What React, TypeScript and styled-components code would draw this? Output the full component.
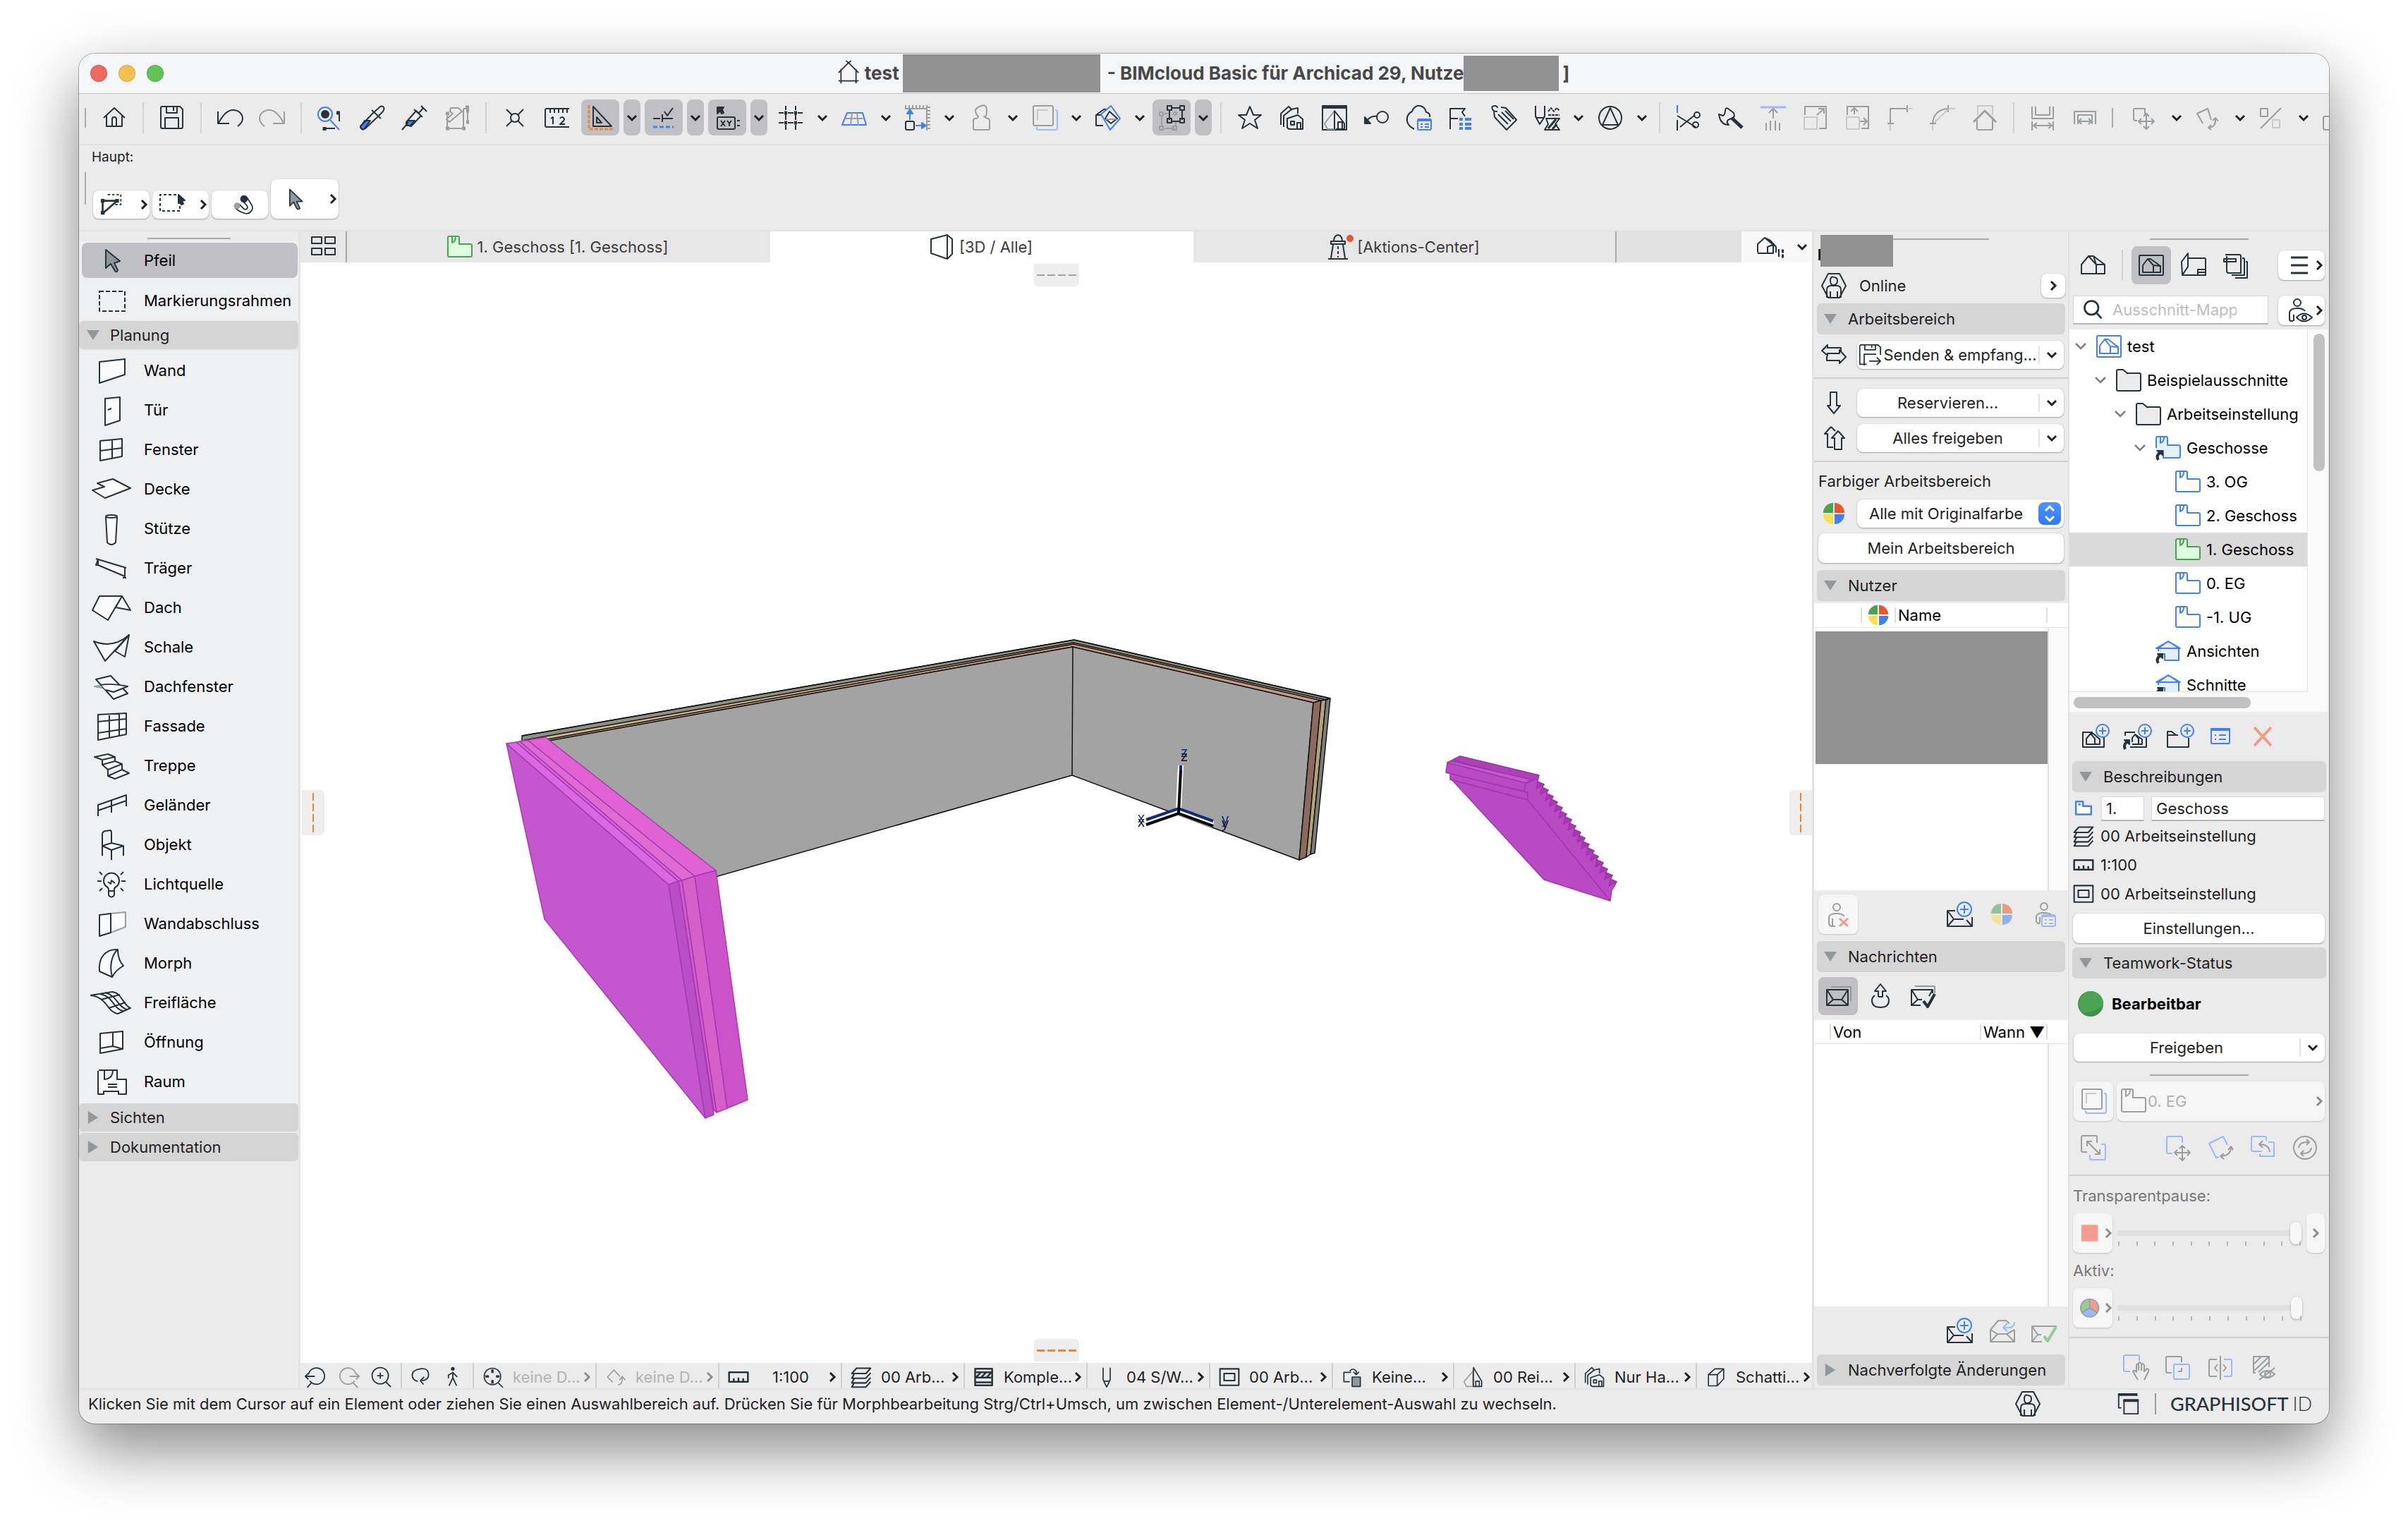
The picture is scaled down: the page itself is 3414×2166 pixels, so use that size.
import React from "react";
import styled, { createGlobalStyle, css } from "styled-components";

const INK = "#26333b";
const BLUE = "#417ff9";
const PALE = "#9cb8f6";
const GREY = "#9a9ea1";
const LIGHT = "#c6c8ca";
const GREEN = "#46a350";
const ORANGE = "#f0862d";

const Global = createGlobalStyle`
  *, *::before, *::after { box-sizing: border-box; }
  body { margin: 0; background: #fff; }
  button, input, select { font: inherit; color: inherit; margin: 0; padding: 0; border: 0; background: none; }
  ul { list-style: none; margin: 0; padding: 0; }
`;

/* ---------- icons ---------- */

const icons: Record<string, React.ReactNode> = {
  home: <path d="M3 18 18 4 33 18M7 15V30H29V15M15 30V20Q15 17 18 17T21 20V30" />,
  save: <path d="M2 4Q2 2 4 2H29L33 6V31Q33 33 31 33H4Q2 33 2 31ZM10 2V11H25V2M20 3V8M8 33V18H27V33" />,
  undo: <path d="M1 9V26H17M2 25C8 14 14 7 22 7C31 7 36 13 36 19C36 24 33 27 29 30" />,
  redo: <path stroke={GREY} d="M35 9V26H19M34 25C28 14 22 7 14 7C5 7 0 13 0 19C0 24 3 27 7 30" />,
  findSelect: (
    <>
      <circle cx="11" cy="13" r="10" stroke={BLUE} />
      <circle cx="11" cy="13" r="5" fill={INK} />
      <path stroke={BLUE} d="M18 21 31 35" />
      <path d="M29 11H31V23M10 33H25" />
      <path strokeWidth="5" d="M27 11h5M10 31v5" />
    </>
  ),
  eyedropper: (
    <>
      <path fill={BLUE} d="M7 22H15L7 33Q4 36 2 33T3 28Z" />
      <path d="M26 5Q30 0 33 2T33 9L25 17 8 33Q4 36 2 33T3 28L19 11ZM17 7 30 19" />
    </>
  ),
  syringe: (
    <>
      <path fill={BLUE} d="M9 22H18L12 29H6Z" />
      <path d="M0 35 6 28 6 24 20 8 27 15 13 30 6 28M24 11 30 4M27 1 35 9M17 6 29 17" />
    </>
  ),
  transfer: (
    <g stroke={GREY}>
      <path d="M9 4H20L25 9 7 24 3 20 12 12 8 9ZM4 15V33H27V5M27 5H33V24" />
      <path strokeWidth="5" d="M2 12h5M30 3h5M2 33h5M25 33h5M31 24h4M31 8h4" />
    </g>
  ),
  cross: <><circle cx="18" cy="18" r="6" /><path d="M6 6 14 14M30 6 22 14M6 30 14 22M30 30 22 22" /></>,
  ruler12: (
    <>
      <path d="M35 5H3Q1 5 1 7V29Q1 31 3 31H35M8 5V11M14 5V11M20 5V11M26 5V11M32 5V11" />
      <path d="M9 19 12 17V27M22 19Q23 17 25 17T28 20Q28 22 22 27H29" />
    </>
  ),
  triangle: (
    <>
      <path d="M8 2V30H34ZM13 17V25H20Z" />
      <path stroke={ORANGE} strokeWidth="3" strokeDasharray="5 2" d="M2 0V34H36" />
    </>
  ),
  guide: (
    <>
      <path d="M3 19H13M17 19H31M16 13V24M19 9 23 15 31 4" />
      <path stroke={BLUE} strokeWidth="3" strokeDasharray="6 3" d="M3 31H32" />
    </>
  ),
  xy: (
    <>
      <path fill={INK} d="M4 3H13L11 6 13 11 10 12 8 8 4 12Z" />
      <rect x="4" y="17" width="25" height="17" rx="2" />
      <path d="M9 22 15 30M15 22 9 30M18 22 21 26 24 22M21 26V30M32 22h4M32 29h4" />
    </>
  ),
  grid: (
    <>
      <path d="M11 1V7M11 13V21M11 28V35M25 1V7M25 13V21M25 28V35M1 11H8M14 11H22M28 11H35M1 25H8M14 25H22M28 25H35" />
      <path strokeWidth="5" d="M9 11h4M23 11h4M9 25h4M23 25h4" />
    </>
  ),
  perspective: <g stroke={BLUE}><path d="M8 11H30L35 28H1Z" /><path stroke={GREY} d="M5 19H32M15 11 13 28M22 11 24 28" /></g>,
  dimension: (
    <>
      <path stroke={GREY} strokeWidth="4" strokeDasharray="2 3" d="M0 2H35M34 2V36" />
      <path stroke={GREY} d="M0 5H31V36" />
      <rect x="1" y="23" width="12" height="12" rx="2" />
      <path stroke={BLUE} d="M7 21V9M15 29H25" />
      <path stroke={BLUE} fill={BLUE} d="M7 6 11 12H3ZM30 29 24 25V33Z" />
    </>
  ),
  stamp: <path stroke={GREY} d="M14 16Q10 12 10 8T18 1T26 8T22 16Q25 19 28 19Q30 20 30 22V33Q30 35 28 35H9Q7 35 7 33V22Q7 20 9 19Q14 19 14 16Z" />,
  trace: (
    <>
      <path stroke={PALE} d="M7 31V33Q7 35 9 35H34Q36 35 36 33V9Q36 7 34 7H33" />
      <rect x="2" y="1" width="28" height="28" rx="2" stroke={GREY} />
      <path stroke={LIGHT} d="M8 21V7H22" />
    </>
  ),
  cutPlane: (
    <>
      <path d="M11 29H1V14L12 6H17M1 14H8" />
      <path stroke={BLUE} d="M22 1 35 19 21 35 8 13Z" />
      <path d="M20 9 31 19 22 26 14 19Z" />
      <path stroke={GREY} d="M15 20H30" />
    </>
  ),
  groupSel: (
    <>
      <g stroke={GREY}><path d="M4 14V31M8 33H22M24 31V24M8 12H12" /><rect x="1" y="10" width="5" height="5" /><rect x="1" y="30" width="5" height="5" /><rect x="20" y="30" width="5" height="5" /><circle cx="23" cy="12" r="2" /></g>
      <path d="M15 6V21M18 4H30M33 6V21M18 23H30" />
      <rect x="12" y="1" width="6" height="6" /><rect x="30" y="1" width="6" height="6" /><rect x="12" y="19" width="6" height="6" /><rect x="30" y="19" width="6" height="6" />
    </>
  ),
  star: <path d="M18 2 23 14H34L25 21 29 33 18 26 7 33 11 21 2 14H13Z" />,
  houses: <path d="M2 28V12L13 2 18 7M6 31V15L17 6 26 4V12M11 33V19L26 14 33 20V34H15Q11 34 11 30M16 23h5v5h-5zM25 34V25h5V34" />,
  pictureHouse: (
    <>
      <rect x="1" y="1" width="34" height="34" />
      <path strokeWidth="4" d="M1 3H35" />
      <path stroke={GREY} d="M4 26 18 8V34H8Z" />
      <path d="M18 8 32 26V34H20M18 8V34M23 34V24H29V34" />
    </>
  ),
  link: <><circle cx="26" cy="17" r="8" /><path d="M18 16C10 15 6 18 3 24" /><path fill={INK} d="M1 17V26H9Z" /></>,
  cloudDoc: (
    <>
      <path d="M11 34C3 30 0 24 1 18C2 12 6 10 8 9C10 3 15 0 19 1C25 2 27 6 28 10C32 11 34 13 33 17" />
      <rect x="16" y="20" width="19" height="15" rx="2" stroke={BLUE} /><path stroke={BLUE} strokeWidth="4" d="M16 21H35" /><path stroke={BLUE} d="M20 27h3M26 27h6M20 31h3M26 31h6" />
    </>
  ),
  flagList: <><path d="M2 34V5H23L19 10 23 16M2 19H13" /><g stroke={BLUE} strokeWidth="4"><path d="M15 20h5M23 20h9M15 27h5M23 27h9M15 33h5M23 33h9" /></g></>,
  tag: <path d="M9 9C2 10 -2 1 5 1Q9 1 9 4M14 3 21 4 36 21 22 35 5 17 4 9M10 13 24 27M15 10 28 23M20 8 32 20" />,
  penHatch: (
    <>
      <path d="M2 1V15Q2 18 5 18H12Q15 18 15 15V1M3 18 8 27 14 18" />
      <path d="M20 9 24 4 28 9 32 4 36 8M20 14H36" strokeDasharray="4 1" />
      <path d="M17 19H36L30 27 36 35H15L20 27Z" /><path strokeWidth="3" d="M20 33 31 20M26 34 32 27" />
    </>
  ),
  circleTri: <><ellipse cx="18" cy="18" rx="16" ry="16" /><path d="M18 4 29 28H7Z" /></>,
  split: <><path stroke={BLUE} d="M2 0V11" /><path d="M2 21V36M2 15 28 31M6 31 27 14" /><circle cx="30" cy="14" r="4" /><circle cx="28" cy="28" r="4" /></>,
  hammer: <><path d="M10 7Q11 3 14 5L22 11Q24 16 21 18L14 21Q11 24 15 28Q3 28 1 13L7 15Q10 13 10 7" /><path strokeWidth="5" d="M19 18 34 32" /></>,
  elevate: <g stroke={GREY}><path stroke={PALE} strokeWidth="3" d="M0 3H36" /><path d="M18 19V5M12 11 18 5 24 11M8 36V25M14 36V22M21 36V22M27 36V25" /></g>,
  resize: <g stroke={GREY}><path d="M3 14V2H33V33H23" /><path d="M20 14 29 6M22 5H30V12" /><path stroke={LIGHT} d="M2 17H20V34H2Z" /></g>,
  stretch: <g stroke={GREY}><path d="M3 14V2H33V33H23M13 13V5M8 9 13 4 18 9M21 23H30M26 18 31 23 26 28" /><path stroke={LIGHT} d="M2 17H20V34H2Z" /></g>,
  corner: <g stroke={GREY}><path d="M4 26V5H28M28 0V10M0 26H9" /><path stroke={LIGHT} d="M28 5H36M4 27V36" /></g>,
  fillet: <g stroke={GREY}><path d="M4 26C5 14 12 6 26 5M26 0V10M0 26H9" /><path stroke={LIGHT} d="M26 5H36M4 27V36M6 25 26 6" /></g>,
  roofTrim: <g stroke={GREY}><path stroke={LIGHT} d="M8 14V1H29V14" /><path d="M7 21V33Q7 35 9 35H27Q29 35 29 33V21" /><path strokeWidth="3" d="M2 24 18 8 34 24" /></g>,
  gapDim: <g stroke={GREY}><path d="M3 2V19H33V2M8 2V14H28V2M3 23V36M33 23V36M5 29H31M10 25 5 29 10 33M26 25 31 29 26 33" /></g>,
  frameDim: <g stroke={GREY}><path d="M3 27V9H33V27M8 27V14H28V27M9 23H27M13 19 9 23 13 27M23 19 27 23 23 27" /></g>,
  moveEdit: <g stroke={GREY}><path d="M7 22H5Q2 22 2 19V7Q2 5 4 5H18V13" /><path d="M20 13V34M10 23H30M16 16 20 12 24 16M16 30 20 34 24 30M13 19 9 23 13 27M27 19 31 23 27 27" /></g>,
  rotateEdit: <g stroke={GREY}><path d="M10 26 2 12 17 5 22 21" /><path d="M28 20C28 28 26 31 18 32M24 22 28 18 32 23M22 28 18 32 22 35" /></g>,
  percent: <g stroke={GREY}><path d="M31 4 2 33M2 5H12V16H2Z" /><path stroke={LIGHT} d="M19 21H29V32H19Z" /></g>,
  edgePair: <path stroke={GREY} d="M11 17V9Q11 7 13 7H20M5 16H18V35H5Q2 35 2 32V18Q2 16 5 16" />,
  floor: <path d="M1 3Q1 1 3 1H15Q17 1 17 3V13H33Q35 13 35 15V31Q35 33 33 33H3Q1 33 1 31ZM7 2V11Q13 9 13 2" />,
  box3d: <path d="M3 7 26 1V35L3 27ZM26 1 33 7V28L26 35" />,
  lighthouse: (
    <>
      <path d="M10 10Q10 2 16 1Q22 2 22 10M6 10H26V14H6ZM9 15 6 34M23 15 26 34M2 35H30M16 17v4M16 24v4M16 31v2" />
      <circle cx="33" cy="6" r="5" fill="#ea5430" stroke="none" />
    </>
  ),
  tiles: <path d="M1 4h14v9H1zM20 4h14v9H20zM1 20h14v9H1zM20 20h14v9H20z" />,
  houseList: <><path d="M2 26V14L12 5 24 15V27H2M16 27V18L26 14M12 5 20 9 28 18V26" /><path d="M32 21V32" /><path strokeWidth="5" d="M36 24h3M36 31h3" /></>,
  markClip: <><path strokeDasharray="4 3" d="M12 2H33V18H20" /><path strokeWidth="3" d="M3 12H27M4 12V31M27 12 4 32" /><path strokeWidth="6" d="M1 12h6M24 12h6M1 31h6" /></>,
  markRect: <><path strokeDasharray="4 3" d="M24 4H1V27H29V16" /><path fill={INK} d="M27 4 36 12H32L34 17 31 18 29 14 27 16Z" /></>,
  magnet: (
    <>
      <path d="M6 24C2 20 8 14 12 18L18 24C22 28 26 24 24 20L17 12C14 6 20 2 24 7L31 18C36 26 28 34 20 32C14 30 9 28 6 24Z" />
      <circle cx="19" cy="9" r="5" fill={INK} /><circle cx="8" cy="20" r="5" fill={GREY} stroke="none" />
    </>
  ),
  arrow: <path fill="#92979b" d="M10 3V29L16 23 21 33Q23 36 26 33L21 22H30Z" />,
  user: <path d="M10 1H26L35 18 26 35H10L1 18ZM18 6Q23 6 23 11T18 17T13 11T18 6M8 35V24Q8 18 14 18H22Q28 18 28 24V35M13 35V26M23 35V26" />,
  exchange: <path d="M7 7 1 12 9 19V15M1 12 9 4V8H28V14M13 16H9V16H26V11L35 21 26 30V26H8V20" />,
  saveSend: <path d="M35 18V6L31 2H4Q2 2 2 4V33H13M10 2V10H27V2M21 3V7M28 17H9V35M17 28H35M29 22 35 28 29 34" />,
  down: <path d="M13 3H22V22H27L18 33 9 22H13Z" />,
  up2: <path d="M14 2 5 12H9V31H17M14 2 20 8M24 8 33 18H29V34H19V18H15Z" />,
  wheel: (
    <g stroke="none">
      <path fill={GREEN} d="M17 3V17H3A14 14 0 0 1 17 3Z" /><path fill="#ea5430" d="M19 3V17H33A14 14 0 0 0 19 3Z" />
      <path fill="#f8e050" d="M17 33V19H3A14 14 0 0 0 17 33Z" /><path fill={BLUE} d="M19 33V19H33A14 14 0 0 1 19 33Z" />
    </g>
  ),
  userX: <><g stroke={GREY}><circle cx="16" cy="8" r="5" /><path d="M14 35H10Q5 35 5 30V22Q6 17 16 17Q24 17 27 21M10 34V24" /></g><path stroke="#f09a88" strokeWidth="3" d="M20 24 32 35M32 24 20 35" /></>,
  mailPlus: <><path d="M12 13H1V35H36V22M1 13 10 25H24M1 35 10 25M36 35 28 26" /><circle cx="25" cy="11" r="10" fill="#ebebeb" stroke={BLUE} /><path stroke={BLUE} d="M25 5V17M19 11H31" /></>,
  userDoc: <><g stroke={GREY}><circle cx="18" cy="7" r="5" /><path d="M12 31Q6 31 7 26V21Q8 16 18 16Q27 16 29 20M12 31V22" /></g><rect x="15" y="19" width="19" height="16" rx="2" stroke={PALE} fill="#ebebeb" /><path stroke={PALE} d="M15 21H34M19 26h3M25 26h6M19 31h3M25 31h6" /></>,
  mails: <><path stroke="#96979d" d="M8 5H36V25" /><path d="M2 9H32V31H2ZM2 9 11 23H23L32 9M2 31 11 23M32 31 23 23" /></>,
  outbox: <path d="M15 19V11H10L18 1 26 11H21V19H15M10 17Q6 20 6 24Q6 34 18 34T30 24Q30 20 26 17" />,
  mailCheck: <><path stroke="#96979d" d="M7 4H35V14" /><path d="M15 31H2V9H32V14M2 9 11 23H17M2 31 11 23M32 9 27 18" /><path strokeWidth="4" d="M19 25 25 33 35 15" /></>,
  mailReply: <g stroke={GREY}><path d="M2 17V34H36V17M2 17 13 4H24L29 8M2 17 12 23H25L36 17M2 34 12 23M36 34 25 23" /><path stroke={PALE} d="M36 6Q36 16 21 14M26 8 20 14 26 19" /></g>,
  mailDone: <g stroke={GREY}><path d="M15 34H1V12H36M1 12 9 24H14M1 34 9 24" /><path stroke="#98ca9b" strokeWidth="4" d="M18 26 23 33 35 13" /></g>,
  house: <path d="M1 30V17L11 5 22 17V30ZM11 5H18L34 17V30H22M22 17H34M18 5 22 17" />,
  houseFrame: <><rect x="1" y="4" width="34" height="28" rx="1" /><path d="M6 28V18L13 9 21 18V28ZM13 9H17L31 19V28H21M21 18 30 19" /></>,
  layout: <path d="M10 8H34Q35 8 35 10V32H2L1 13 10 1V20L2 32M24 32V24H35M24 28H35" />,
  pages: <path d="M3 3H23Q25 3 25 5V29H8Q5 29 5 26V5M1 9H18V13H1ZM27 8H29Q30 8 30 10V32H12M32 13H34V36H17" />,
  menu: <path strokeWidth="3" d="M6 7H30M6 18H30M6 29H30" />,
  userEye: <><circle cx="15" cy="7" r="5" /><path d="M9 33H6Q4 33 4 30V21Q5 15 15 15Q23 15 26 19M10 33V24" /><path d="M14 28Q24 17 36 28Q24 39 14 28Z" /><circle cx="25" cy="28" r="3" /></>,
  search: <><circle cx="16" cy="15" r="11" strokeWidth="3" /><path strokeWidth="3" d="M24 23 32 32" /></>,
  projectBlue: <g stroke={BLUE} fill="#fff"><rect x="1" y="3" width="34" height="30" rx="1" /><path d="M5 28V17L12 8 20 18V28ZM12 8H17L31 19V28H20M20 18 30 19" /></g>,
  folder: <><rect x="1" y="8" width="34" height="25" rx="2" fill="#ebebeb" /><path fill="#ebebeb" d="M1 9V5Q1 3 3 3H10L17 9" /></>,
  floorBlue: <g stroke={BLUE}><path fill="#fff" d="M1 5Q1 3 3 3H15Q17 3 17 5V14H33Q35 14 35 16V30Q35 32 33 32H3Q1 32 1 30ZM7 4V12Q12 10 12 4" /></g>,
  floorGreen: <g stroke={GREEN}><path fill="#dffcdf" d="M1 5Q1 3 3 3H15Q17 3 17 5V14H33Q35 14 35 16V30Q35 32 33 32H3Q1 32 1 30ZM7 4V12Q12 10 12 4" /></g>,
  floorLink: <><path stroke={BLUE} fill="#e4f0ff" d="M1 18V4Q1 2 3 2H15Q17 2 17 4V14H33Q35 14 35 16V30Q35 32 33 32H11V22H1M7 3V11Q12 9 12 3" /><path strokeWidth="4" d="M4 35Q0 29 7 24" /><path fill={INK} d="M3 22H10V28Z" /></>,
  viewLink: <><path stroke={BLUE} fill="#e4f0ff" d="M4 18V14L18 4 33 14V31H13V22H4M1 14 18 4 35 14ZM4 14H33" /><path strokeWidth="4" d="M4 35Q0 29 7 24" /><path fill={INK} d="M3 22H10V28Z" /></>,
  addView: <><path d="M17 12H3V33H33V19M8 29V21L14 14 20 21V29ZM14 14H18L27 22V29H20" /><circle cx="31" cy="10" r="9" fill="#ebebeb" stroke={BLUE} /><path stroke={BLUE} d="M31 5V15M26 10H36" /></>,
  addLinked: <><path d="M17 12H3V17M10 33H33V19M13 26V20L17 15 22 21V29H13M17 15 27 22V29H22" /><path strokeWidth="4" d="M3 36Q0 30 6 25" /><path fill={INK} d="M2 23H9V29Z" /><circle cx="31" cy="10" r="9" fill="#ebebeb" stroke={BLUE} /><path stroke={BLUE} d="M31 5V15M26 10H36" /></>,
  addFolder: <><path d="M33 20V33H3V11H9L15 16H18M3 16H15" /><circle cx="31" cy="10" r="9" fill="#ebebeb" stroke={BLUE} /><path stroke={BLUE} d="M31 5V15M26 10H36" /></>,
  listBlue: <g stroke={BLUE}><rect x="5" y="8" width="26" height="20" rx="1" /><path strokeWidth="4" d="M4 8H32" /><path d="M10 16h2M16 16h10M10 22h2M16 22h10" /></g>,
  redX: <path stroke="#f09a88" strokeWidth="4" d="M6 5 30 31M30 5 6 31" />,
  floorSmall: <path stroke={BLUE} fill="#fff" strokeWidth="3" d="M5 5H17V13H31V27H5ZM9 10H13" />,
  layers: <path strokeWidth="2.5" d="M10 3H34L26 12H2ZM6 13 2 20H26L34 11M6 21 2 28H26L34 19M6 28 2 35H26L34 26" />,
  scale: <path strokeWidth="3" d="M2 10H34V26H2ZM10 26V20M18 26V19M26 26V20" />,
  frame: <path strokeWidth="2.5" d="M2 4H34V32H2ZM9 12H27V24H9Z" />,
  statusDot: <g stroke="none"><circle cx="18" cy="18" r="18" fill="#3f8f46" /><path fill="#4aa552" d="M18 0A18 18 0 0 0 7 31Q31 29 36 17A18 18 0 0 0 18 0Z" /></g>,
  traceMove: <g><path stroke={GREY} d="M9 24H3Q1 24 1 22V3Q1 1 3 1H21Q23 1 23 3V11" /><path stroke={PALE} d="M29 13H33Q35 13 35 15V33Q35 35 33 35H15Q13 35 13 33V28" /><path stroke={GREY} d="M9 9 27 27M9 16V9H16M20 27H27V20" /></g>,
  bMove: <g stroke={GREY}><path stroke={PALE} d="M10 26H3Q2 26 2 24V4Q2 2 4 2H22Q24 2 24 4V11" /><path d="M24 15V36M13 25H35M20 19 24 15 28 19M20 32 24 36 28 32M17 21 13 25 17 29M31 21 35 25 31 29" /></g>,
  bRotate: <g stroke={GREY}><path stroke={PALE} d="M22 2 2 12 12 32 16 31M22 2 28 14" /><path d="M33 17Q33 29 19 30M29 21 33 16 36 21M23 26 18 30 23 34" /></g>,
  bReset: <g stroke={GREY}><path stroke={PALE} d="M17 23H4Q2 23 2 21V4Q2 2 4 2H21Q23 2 23 4V8M26 10H32Q34 10 34 12V30H14V27" /><path d="M28 24Q27 13 13 13M18 8 13 13 18 18" /></g>,
  bSwap: <g stroke={GREY}><circle cx="18" cy="18" r="16" /><path d="M9 18Q10 9 24 10M20 6 24 10 20 14M27 18Q26 27 12 26M16 22 12 26 16 30" /></g>,
  redBlock: <path fill="#f19c8f" stroke="none" d="M0 4H28V32H0Z" />,
  rgb: <g stroke={GREY}><path fill={PALE} d="M14 18 1 26A15 15 0 0 0 27 26Z" /><path fill="#98ca9b" d="M14 18V3A15 15 0 0 0 1 26Z" /><path fill="#f19c8f" d="M14 18V3A15 15 0 0 1 27 26Z" /></g>,
  hand: <g stroke={GREY}><path stroke={PALE} d="M10 24H3Q1 24 1 22V3Q1 1 3 1H21Q23 1 23 3V9" /><path d="M21 36 14 24Q15 21 19 25V15Q20 12 22 15V22V12Q24 10 26 13V22V14Q28 12 30 15V24L34 20Q37 20 36 24L30 36" /></g>,
  overlap: <g><path stroke={GREY} d="M9 26H3Q1 26 1 24V5Q1 3 3 3H21Q23 3 23 5V11M18 24H23V19" /><rect x="12" y="14" width="22" height="21" rx="2" stroke={PALE} /></g>,
  splitView: <g stroke={GREY}><path d="M13 7H4Q2 7 2 9V29Q2 31 4 31H13M18 2V36M14 14 10 19 14 24M22 14 26 19 22 24" /><path stroke={PALE} d="M23 7H33Q34 7 34 9V29Q34 31 33 31H23" /></g>,
  hideHatch: <g stroke={GREY}><path d="M8 26H5V3H27V18M6 13 16 3M6 23 26 4M12 25 27 11" /><path d="M14 28Q24 18 35 28Q24 38 14 28ZM13 36 35 19" /><circle cx="25" cy="28" r="4" /></g>,
  windows: <><path d="M30 6V3H3V24H7M11 12H32V33H11Z" /><path strokeWidth="4" d="M2 4H31M10 13H33" /></>,
  zoomBack: <path d="M8 25A13 13 0 1 0 6 15M1 18H16M6 13 1 18 6 23M11 28 4 36" />,
  zoomFwd: <path stroke={GREY} d="M28 25A13 13 0 1 1 30 15M35 18H20M30 13 35 18 30 23M25 28 33 36" />,
  zoomIn: <><circle cx="17" cy="17" r="13" /><path d="M17 12V22M12 17H22M26 27 34 35" /></>,
  orbit: <path d="M14 26Q5 24 5 16T18 6T31 16Q31 24 20 25M24 19 18 25 23 31" />,
  walk: <><circle cx="18" cy="6" r="2" fill={INK} /><path d="M18 11V20L12 33M18 20 24 33M18 12 11 16V21M18 12 25 19" /></>,
  fit: <><circle cx="17" cy="17" r="14" /><path d="M27 28 35 36" /><path strokeWidth="4" d="M17 5V11M17 23V29M5 17H11M23 17H29" /></>,
  diamondUp: <path stroke={GREY} d="M13 27 4 18 15 6 25 17M22 31Q30 31 29 19M24 23 29 17 34 23" />,
  hatchBox: <path d="M3 4H32V32H3ZM3 10H32M3 19H32M3 27H32M5 18 12 11M14 18 21 11M23 18 30 11" strokeWidth="3" />,
  pencil: <path d="M12 2V22Q12 25 15 25H21Q24 25 24 22V2M13 25 18 35 23 25" />,
  replace: <><path d="M14 26H4V10H16M14 8Q19 1 25 8V12M20 9 25 14 30 9" /><path fill="#92979b" d="M18 18H32V34H18Z" /></>,
  peak: <><path stroke={GREY} d="M2 26 17 8V34H6Z" /><path d="M18 2 32 25V34H18ZM22 34V25H28V34" /></>,
  cube: <path d="M5 14 16 4H31V21L20 33H5ZM5 14H20V33M20 14 31 4" />,
  appHouse: <path d="M6 11V34M30 11V34M2 30H34M2 17 18 1 34 17M14 -2 18 1M22 -2 18 1" />,
};

const Svg = styled.svg<{ $s: number }>`
  width: ${(p) => p.$s}px;
  height: ${(p) => p.$s}px;
  flex: none;
  overflow: visible;
  fill: none;
  stroke: ${INK};
  stroke-width: 2;
  stroke-linejoin: round;
`;
const Icon = ({ n, s = 36 }: { n: string; s?: number }) => (
  <Svg $s={s} viewBox="0 0 36 36" aria-hidden="true">{icons[n]}</Svg>
);

const Chev = styled.svg<{ $dim?: boolean }>`
  width: 16px;
  height: 16px;
  flex: none;
  fill: none;
  stroke: ${(p) => (p.$dim ? "#8d8d8d" : "#222")};
  stroke-width: 3;
`;
const Down = () => <Chev viewBox="0 0 16 16"><path d="M2 5 8 11 14 5" /></Chev>;
const Right = ({ dim }: { dim?: boolean }) => <Chev $dim={dim} viewBox="0 0 16 16"><path d="M5 2 11 8 5 14" /></Chev>;

const Tri = styled.span<{ $open?: boolean }>`
  width: 18px;
  height: ${(p) => (p.$open ? 14 : 18)}px;
  flex: none;
  background: #92979b;
  clip-path: ${(p) => (p.$open ? "polygon(0 0, 100% 0, 50% 100%)" : "polygon(10% 0, 90% 50%, 10% 100%)")};
`;

/* ---------- window frame ---------- */

const Desktop = styled.div`
  height: 100vh;
  padding: 76px 112px 148px;
  display: flex;
  background: #fff;
  color: #1f1f1f;
  font: 22px/26px Inter, "Liberation Sans", sans-serif;
`;
const Window = styled.div`
  flex: 1;
  min-width: 0;
  display: flex;
  flex-direction: column;
  background: #ebebeb;
  border-radius: 22px;
  overflow: hidden;
  box-shadow: 0 0 0 1px rgba(0, 0, 0, 0.28), 0 36px 90px rgba(0, 0, 0, 0.48);
`;
const TitleBar = styled.header`
  position: relative;
  height: 57px;
  flex: none;
  display: flex;
  align-items: center;
  justify-content: center;
  background: #f4f5f7;
  border-bottom: 1px solid #c4c4c4;
  font-size: 26px;
  font-weight: 700;
  color: #484848;
  white-space: pre;
`;
const Lights = styled.div`
  position: absolute;
  left: 16px;
  top: 16px;
  display: flex;
  gap: 16px;
`;
const Light = styled.button<{ $c: string }>`
  width: 24px;
  height: 24px;
  border-radius: 50%;
  background: ${(p) => p.$c};
  box-shadow: inset 0 0 0 1px rgba(0, 0, 0, 0.12);
`;
const Redaction = styled.span<{ $w: number; $h: number }>`
  width: ${(p) => p.$w}px;
  height: ${(p) => p.$h}px;
  flex: none;
  background: #919191;
`;
const TitleText = styled.span<{ $before: number; $after: number }>`
  padding: 0 ${(p) => p.$after}px 0 ${(p) => p.$before}px;
`;

/* ---------- toolbar ---------- */

const Toolbar = styled.div`
  height: 73px;
  flex: none;
  display: flex;
  align-items: center;
  padding-bottom: 4px;
  border-bottom: 2px solid #e3e3e3;
  overflow: hidden;
`;
const Grip = styled.span<{ $w: number }>`
  width: ${(p) => p.$w}px;
  flex: none;
  height: 28px;
  background: linear-gradient(#ababab, #ababab) 8px 0 / 2px 100% no-repeat;
`;
const Sep = styled.span`
  width: 22px;
  height: 44px;
  flex: none;
  background: linear-gradient(#d2d2d2, #d2d2d2) 10px 0 / 2px 100% no-repeat;
`;
const Cell = styled.button<{ $faded?: boolean }>`
  width: 60px;
  height: 60px;
  flex: none;
  display: flex;
  align-items: center;
  justify-content: center;
  opacity: ${(p) => (p.$faded ? 0.55 : 1)};
`;
const DropCell = styled.div<{ $on?: boolean }>`
  width: 90px;
  flex: none;
  padding: 0 2px 0 4px;
  display: flex;
  gap: 6px;
  button {
    height: 51px;
    width: 24px;
    display: flex;
    align-items: center;
    justify-content: center;
    border-radius: 8px;
    background: ${(p) => (p.$on ? "#bfbfc4" : "none")};
  }
  button:first-child { width: 54px; }
`;

type Tool = string | [string] | [string, "on"];
const tools: Tool[] = [
  "home", "|", "save", "|", "undo", "redo", "|", "findSelect", "eyedropper", "syringe", "transfer", "|",
  "cross", "ruler12", ["triangle", "on"], ["guide", "on"], ["xy", "on"], ["grid"], ["perspective"], ["dimension"],
  ["stamp"], ["trace"], ["cutPlane"], ["groupSel", "on"], "|", "star", "houses", "pictureHouse", "link", "cloudDoc",
  "flagList", "tag", ["penHatch"], ["circleTri"], "|", "split", "hammer", "elevate", "resize", "stretch", "corner",
  "fillet", "roofTrim", "|", "gapDim", "frameDim", "grip", ["moveEdit"], ["rotateEdit"], ["percent"], "edgePair",
];

const InfoStrip = styled.div`
  height: 122px;
  flex: none;
  display: flex;
  flex-direction: column;
  border-bottom: 2px solid #e3e3e3;
`;
const InfoLabel = styled.span`
  padding: 4px 0 0 18px;
  font-size: 19px;
`;
const InfoRow = styled.div`
  display: flex;
  align-items: flex-end;
  gap: 4px;
  padding-top: 8px;
`;
const InfoGrip = styled.span`
  width: 16px;
  height: 46px;
  margin-bottom: 20px;
  background: linear-gradient(#ababab, #ababab) 8px 0 / 2px 100% no-repeat;
`;
const raised = css`
  background: #fff;
  border-radius: 8px;
  box-shadow: 0 1px 2px rgba(0, 0, 0, 0.3), 0 0 1px rgba(0, 0, 0, 0.25);
`;
const InfoButton = styled.button<{ $big?: boolean }>`
  ${raised}
  width: ${(p) => (p.$big ? 96 : 80)}px;
  height: ${(p) => (p.$big ? 56 : 40)}px;
  display: flex;
  align-items: center;
  justify-content: space-between;
  padding: 0 0 0 ${(p) => (p.$big ? 18 : 10)}px;
`;

/* ---------- main area ---------- */

const Main = styled.div`
  flex: 1;
  min-height: 0;
  display: grid;
  grid-template-columns: 314px minmax(0, 1fr) 363px 370px;
`;
const Palette = styled.nav`
  display: flex;
  flex-direction: column;
  border-right: 3px solid #e4e4e4;
`;
const Grabber = styled.div<{ $w: number; $h: number }>`
  height: ${(p) => p.$h}px;
  flex: none;
  display: flex;
  align-items: center;
  justify-content: center;
  &::after {
    content: "";
    width: ${(p) => p.$w}px;
    height: 2px;
    margin-top: 6px;
    background: #a9a9a9;
  }
`;
const ToolList = styled.ul`
  background: #eef0f2;
  padding: 2px 1px 1px 4px;
  &:not(:first-of-type) { padding: 0 1px 3px 4px; }
`;
const ToolButton = styled.button<{ $on?: boolean }>`
  width: 100%;
  height: 56px;
  display: flex;
  align-items: center;
  gap: 16px;
  padding-left: 12px;
  color: #000;
  ${(p) => p.$on && css`
    height: 50px;
    margin-bottom: 4px;
    border-radius: 8px;
    background: #bfbfc4;
  `}
`;
const ToolSvg = styled.svg`
  width: 60px;
  height: 48px;
  flex: none;
  fill: #fafafa;
  stroke: ${INK};
  stroke-width: 2;
  stroke-linejoin: round;
`;
const Group = styled.button`
  height: 40px;
  width: 100%;
  flex: none;
  margin-bottom: 2px;
  display: flex;
  align-items: center;
  gap: 15px;
  padding-left: 11px;
  border-radius: 6px;
  background: #d5d5d5;
`;

const planTools: [string, React.ReactNode][] = [
  ["Wand", <path d="M13 10 49 6V28L13 40Z" />],
  ["Tür", <path d="M21 6 42 4V37L21 44ZM25 22 30 20" />],
  ["Fenster", <path d="M14 10 45 7V32L14 38ZM31 9V35M14 24 45 20" />],
  ["Decke", <path d="M3 24 20 19 10 14 32 8 57 21 21 35Z" />],
  ["Stütze", <><path d="M22 6 24 42Q30 48 36 42L38 6" /><ellipse cx="30" cy="5" rx="8" ry="2" /></>],
  ["Träger", <path d="M8 9 51 22M8 18 11 18V10ZM11 18 49 34V22M46 36H51" />],
  ["Dach", <path d="M3 26 13 6H45L25 40ZM45 6 57 26 36 22Z" />],
  ["Schale", <><path d="M55 5 49 36 35 28Z" /><path d="M5 14 21 42 55 5Q32 25 5 14Z" /></>],
  ["Dachfenster", <><path stroke={GREY} fill="none" d="M22 20 6 22 22 25" /><path d="M8 12 29 7 53 32 33 40Z" /><path d="M15 20Q28 17 53 22L33 30 22 27" /></>],
  ["Fassade", <path d="M11 6 51 4V34L11 42ZM27 5V39M41 4V36M11 16 51 12M11 32 51 26" />],
  ["Treppe", <path d="M6 10 25 6 35 10V16L45 20V28L55 33 35 41 25 37V28L17 21V14ZM17 14 35 10M17 21 35 16M25 28 45 20M25 37 45 28" />],
  ["Geländer", <path fill="none" d="M11 38V22L51 8V24M11 30 51 16M30 15V33" />],
  ["Objekt", <><path fill="none" d="M17 38V8Q17 4 21 3L28 2Q30 2 30 5V20M47 24V38M30 30V44" /><path d="M17 24 30 20 47 24 30 30Z" /></>],
  ["Lichtquelle", <><path d="M26 30Q26 27 22 25A11 11 0 1 1 38 25Q34 27 34 30V38Q30 43 26 38ZM26 32H34" /><path fill="none" d="M25 19 29 22 30 17 35 21M10 18h6M44 18h6M13 5l4 4M47 5l-4 4M13 32l4-4M47 32l-4-4" /></>],
  ["Wandabschluss", <><path stroke={GREY} d="M29 8 50 6V27L29 35" /><path d="M13 10 29 8V35L13 40Z" /></>],
  ["Morph", <path d="M13 34C11 14 22 2 39 3C39 12 41 20 47 26C40 30 34 36 31 42ZM31 42C27 26 30 11 39 3" />],
  ["Freifläche", <><path d="M0 12 31 7C45 8 46 26 57 30L39 38C24 36 24 14 0 12Z" /><path fill="none" d="M14 10C34 14 32 32 47 34M21 8C38 12 38 28 52 32M15 18 42 11M26 30 50 22" /></>],
  ["Öffnung", <path d="M14 10 46 7V32L14 38ZM32 9V28L14 31M32 28 46 32" />],
  ["Raum", <path d="M12 6H20V19Q32 18 32 6H38V19H51V40H40V36H19V40H11V7M20 6H32M25 26H38M25 30H38" />],
];

/* ---------- centre ---------- */

const Centre = styled.main`
  min-width: 0;
  display: flex;
  flex-direction: column;
`;
const Tabs = styled.div`
  height: 44px;
  flex: none;
  display: grid;
  grid-template-columns: 66px repeat(3, 600px) minmax(0, 1fr) 100px;
  background: #e2e2e2;
`;
const TabLead = styled.button`
  display: flex;
  align-items: center;
  justify-content: center;
  padding-left: 2px;
  background: #e6e6e6;
  border-right: 2px solid #a9a9a9;
`;
const Tab = styled.button<{ $on?: boolean; $end?: boolean }>`
  display: flex;
  align-items: center;
  justify-content: center;
  gap: 7px;
  padding-right: 3px;
  background: ${(p) => (p.$on ? "#fff" : "#e6e6e6")};
  color: #3c3c3c;
  border-right: ${(p) => (p.$end ? "2px solid #a9a9a9" : "0")};
`;
const TabMenu = styled.button`
  grid-column: 6;
  display: flex;
  align-items: center;
  justify-content: space-between;
  padding: 0 6px 0 21px;
  background: #f8f8f8;
`;
const Viewport = styled.div`
  position: relative;
  flex: 1;
  min-height: 0;
  background: #fff;
  overflow: hidden;
`;
const Scene = styled.svg`
  display: block;
  width: 100%;
  height: 100%;
`;
const AxisLabel = styled.text`
  font: 20px "Liberation Sans", sans-serif;
  fill: #111;
  stroke: none;
  filter: drop-shadow(0 -6px 0 #142a80);
`;
const Handle = styled.button<{ $side: "top" | "bottom" | "left" | "right" }>`
  position: absolute;
  display: flex;
  align-items: center;
  justify-content: center;
  gap: 4px;
  background: #eee;
  span { background: ${(p) => (p.$side === "top" ? "#a0a0a0" : ORANGE)}; }
  ${(p) =>
    p.$side === "top" || p.$side === "bottom"
      ? css`
          left: calc(50% - 32px);
          ${p.$side}: 2px;
          width: 64px;
          height: 32px;
          border-radius: ${p.$side === "top" ? "0 0 6px 6px" : "6px 6px 0 0"};
          span { width: 11px; height: ${p.$side === "top" ? 2 : 3}px; }
        `
      : css`
          top: calc(50% - 32px);
          ${p.$side}: ${p.$side === "left" ? 2 : 0}px;
          width: 32px;
          height: 64px;
          flex-direction: column;
          border-radius: ${p.$side === "left" ? "0 6px 6px 0" : "6px 0 0 6px"};
          span { width: 2px; height: 11px; }
        `}
`;
const Dashes = () => <><span /><span /><span /><span /></>;

const QuickBar = styled.div`
  height: 36px;
  flex: none;
  display: flex;
`;
const QuickNav = styled.div<{ $lead: number }>`
  display: flex;
  align-items: center;
  gap: 14px;
  padding: 2px 12px 0 ${(p) => p.$lead}px;
  border-right: 2px solid #cfcfcf;
  button { display: flex; }
`;
const QuickOptions = styled.div`
  flex: 1;
  min-width: 0;
  display: grid;
  grid-template-columns: repeat(7, 174px) repeat(3, 172px) minmax(0, 1fr);
`;
const QuickOption = styled.button<{ $dim?: boolean; $center?: boolean }>`
  min-width: 0;
  display: flex;
  align-items: center;
  padding: 3px 4px 0 12px;
  border-right: 2px solid #cfcfcf;
  white-space: nowrap;
  color: ${(p) => (p.$dim ? "#b4b4b4" : "#1f1f1f")};
  &:last-child { border: 0; padding-right: 0; }
  span {
    flex: 1;
    padding-left: ${(p) => (p.$center ? 8 : 13)}px;
    text-align: ${(p) => (p.$center ? "center" : "left")};
  }
`;
const quick: [string, string][] = [
  ["fit", "keine D..."], ["diamondUp", "keine D..."], ["scale", "1:100"], ["layers", "00 Arb..."],
  ["hatchBox", "Komple..."], ["pencil", "04 S/W..."], ["frame", "00 Arb..."], ["replace", "Keine..."],
  ["peak", "00 Rei..."], ["houses", "Nur Ha..."], ["cube", "Schatti..."],
];

const treads = Array.from({ length: 17 }, (_, i) => {
  const t = i / 16;
  return [Math.round(2189 + 103 * t), Math.round(1112 + 138 * t - 6 * t * (1 - t))];
});

const Model = () => (
  <Scene viewBox="426 372 2143 1560" strokeWidth="1.5" strokeLinejoin="round">
    <g stroke="#111">
      <path fill="#8f8f86" d="M740 1043 1523 907 1886 990 1862 996 1521 917 752 1055 740 1052Z" />
      <path fill="#cbb88a" d="M744 1049 1522 911 1880 992 1862 996 1521 917 752 1055Z" />
      <path fill="#c49a83" d="M748 1053 1522 913 1873 993 1862 996 1521 917 752 1055Z" />
      <path stroke="none" fill="#a3a3a3" d="M778 1050 1521 917V1099L1016 1243Z" />
      <path fill="#a3a3a3" d="M1521 917 1862 996 1842 1219 1520 1099Z" />
      <path fill="none" d="M778 1050 1521 917M1520 1099 1014 1243M740 1043 1523 907 1886 990" />
      <path fill="#8c6a5d" d="M1862 996 1873 993 1852 1215 1842 1219Z" />
      <path fill="#b3a37a" d="M1873 993 1880 992 1858 1211 1852 1215Z" />
      <path fill="#7d7d7a" d="M1880 992 1886 990 1864 1209 1858 1211Z" />
    </g>
    <g stroke="#a63ab0">
      <path fill="#c456d0" d="M718 1054 948 1254 1000 1585 772 1303Z" />
      <path fill="#d968e2" d="M718 1054 732 1052 962 1249 948 1254Z" />
      <path fill="#d765dd" d="M732 1052 737 1051 967 1248 962 1249Z" />
      <path fill="#df6ad4" d="M737 1051 748 1049 985 1242 967 1248Z" />
      <path fill="#e062d5" d="M748 1049 773 1045 1015 1234 985 1242Z" />
      <path fill="#b94ec6" d="M948 1254 962 1249 1012 1580 1000 1585Z" />
      <path fill="#cf5bcd" d="M962 1249 967 1248 1016 1577 1012 1574Z" />
      <path fill="#d660c9" d="M967 1248 985 1242 1031 1571 1016 1577Z" />
      <path fill="#cc52ca" d="M985 1242 1015 1234 1060 1559 1031 1571Z" />
    </g>
    <g stroke="#a036aa">
      <path
        fill="#b84ac6"
        d={`M2052 1081 2070 1072 2182 1099 2180 1107 ${treads
          .map(([x, y]) => `L${x - 9} ${y - 4} ${x} ${y} ${x - 3} ${y + 6}`)
          .join(" ")} L2285 1262 2283 1277 2189 1247 2059 1106 2056 1105V1096L2050 1095Z`}
      />
      <path fill="#ae40ba" d="M2060 1077 2070 1072 2182 1099 2170 1107Z" />
      <path fill="#c458d2" d="M2052 1081 2058 1079 2171 1105 2163 1110Z" />
      <path fill="none" d="M2163 1110 2161 1122 2050 1095M2161 1122 2166 1124V1134L2056 1105M2163 1110 2180 1104M2166 1134 2283 1277" />
      {treads.map(([x, y]) => (
        <path key={x} fill="#a53ab2" d={`M${x} ${y}L${x - 11} ${y + 6}L${x - 9} ${y - 4}Z`} />
      ))}
    </g>
    <g fill="none" strokeLinejoin="miter">
      <path stroke="#fff" strokeWidth="8" d="M1674 1085 1671 1146M1625 1166 1671 1150 1720 1168" />
      <path stroke="#142a80" strokeWidth="4" d="M1674 1085V1095" />
      <path stroke="#fff" strokeWidth="7" d="M1625 1168 1671 1152 1720 1170" />
      <path stroke="#142a80" strokeWidth="4" d="M1625 1162 1671 1146 1720 1164" />
      <path stroke="#000" strokeWidth="4" d="M1674 1092 1671 1153M1625 1169 1671 1153 1720 1171" />
    </g>
    <AxisLabel x="1674" y="1079">z</AxisLabel>
    <AxisLabel x="1613" y="1172">x</AxisLabel>
    <AxisLabel x="1732" y="1174">y</AxisLabel>
  </Scene>
);

/* ---------- side panels ---------- */

const Panel = styled.aside`
  min-width: 0;
  min-height: 0;
  display: flex;
  flex-direction: column;
  border-left: 3px solid #e2e2e2;
  &:last-child { border-left-width: 2px; }
`;
const PanelHead = styled.div`
  height: 56px;
  flex: none;
  display: flex;
  align-items: flex-start;
  padding: 5px 0 0 5px;
`;
const Initial = styled.span`
  width: 4px;
  margin-top: 15px;
  font-weight: 800;
  color: #000;
`;
const HeadLine = styled.span`
  width: 136px;
  height: 2px;
  margin-top: 5px;
  background: #a9a9a9;
`;
const OnlineRow = styled.div`
  height: 46px;
  flex: none;
  display: flex;
  align-items: center;
  gap: 18px;
  padding: 0 4px 4px 10px;
  span { flex: 1; }
`;
const SmallButton = styled.button<{ $w: number; $h: number; $dim?: boolean; $between?: boolean }>`
  ${raised}
  width: ${(p) => p.$w}px;
  height: ${(p) => p.$h}px;
  flex: none;
  display: flex;
  align-items: center;
  justify-content: ${(p) => (p.$between ? "space-between" : "center")};
  padding: ${(p) => (p.$between ? "0 0 0 12px" : "0")};
  ${(p) => p.$dim && css`
    background: #f5f5f5;
    box-shadow: 0 1px 2px rgba(0, 0, 0, 0.18);
  `}
`;
const SectionHead = styled.button`
  height: 44px;
  flex: none;
  margin: 0 4px;
  display: flex;
  align-items: center;
  gap: 16px;
  padding-left: 10px;
  border-radius: 6px;
  background: #d5d5d5;
`;
const Section = styled.div<{ $p: string; $gap?: number; $line?: boolean }>`
  flex: none;
  display: flex;
  flex-direction: column;
  gap: ${(p) => p.$gap || 0}px;
  padding: ${(p) => p.$p};
  border-bottom: ${(p) => (p.$line ? "2px solid #cfcfcf" : "0")};
`;
const Caption = styled.label`
  height: 31px;
`;
const Row = styled.div<{ $gap?: number }>`
  display: flex;
  align-items: center;
  gap: ${(p) => p.$gap || 0}px;
`;
const IconCol = styled.span`
  width: 55px;
  flex: none;
  display: flex;
  padding-left: 4px;
`;
const Split = styled.div`
  ${raised}
  flex: 1;
  min-width: 0;
  height: 40px;
  display: flex;
  align-items: center;
`;
const SplitMain = styled.button`
  flex: 1;
  min-width: 0;
  height: 100%;
  display: flex;
  align-items: center;
  justify-content: center;
  gap: 3px;
  white-space: nowrap;
`;
const SplitDrop = styled.button`
  width: 36px;
  height: 26px;
  flex: none;
  display: flex;
  align-items: center;
  justify-content: center;
  border-left: 2px solid #e4e4e4;
`;
const SelectWrap = styled.div`
  ${raised}
  position: relative;
  flex: 1;
  height: 40px;
  display: flex;
  select {
    flex: 1;
    width: 100%;
    appearance: none;
    padding-left: 17px;
    line-height: 26px;
  }
`;
const Stepper = styled.span`
  position: absolute;
  right: 4px;
  top: 4px;
  width: 32px;
  height: 32px;
  border-radius: 8px;
  background: linear-gradient(#4d94fb, #2f77f6);
  pointer-events: none;
  svg { display: block; fill: none; stroke: #fff; stroke-width: 3; }
`;
const WideButton = styled.button`
  ${raised}
  height: 42px;
  flex: none;
`;
const Table = styled.table`
  flex: none;
  width: 100%;
  height: 34px;
  border-collapse: collapse;
  table-layout: fixed;
  background: #fff;
  color: #000;
  th {
    height: 33px;
    padding: 0 0 0 3px;
    text-align: left;
    font-weight: 400;
    border-bottom: 1px solid #e2e2e2;
    background: linear-gradient(#dedede, #dedede) right center / 2px 22px no-repeat;
  }
  th:last-child { background: none; }
  svg { display: block; margin-left: 3px; }
`;
const Col = styled.col<{ $w: number }>`
  width: ${(p) => p.$w}px;
`;
const List = styled.div`
  flex: 1 1 0;
  min-height: 0;
  display: flex;
  flex-direction: column;
  padding: 5px 0 0 2px;
  background: linear-gradient(#e2e2e2, #e2e2e2) right 27px top / 2px 100% no-repeat,
    linear-gradient(#fafafa, #fafafa) right top / 28px 100% no-repeat, #fff;
`;
const ToolsRow = styled.div<{ $h: number; $p?: string }>`
  height: ${(p) => p.$h}px;
  flex: none;
  display: flex;
  align-items: center;
  padding: ${(p) => p.$p || "0 4px"};
`;
const Spacer = styled.span`flex: 1;`;
const ActiveIcon = styled.button`
  width: 56px;
  height: 54px;
  margin: 0 2px;
  flex: none;
  display: flex;
  align-items: center;
  justify-content: center;
  border-radius: 8px;
  background: #bfbfc4;
`;

const SearchRow = styled.div`
  flex: none;
  height: 61px;
  display: flex;
  gap: 14px;
  padding: 13px 6px 0 5px;
`;
const SearchBox = styled.label`
  flex: 1;
  min-width: 0;
  height: 41px;
  display: flex;
  align-items: center;
  gap: 12px;
  padding: 0 44px 0 11px;
  background: #fff;
  border: 1px solid #d6d6d6;
  border-bottom: 2px solid #b6b6b6;
  input { flex: 1; width: 100%; min-width: 0; outline: 0; }
  input::placeholder { color: #bdbdbd; opacity: 1; }
`;
const TreeArea = styled.div`
  flex: 1 1 0;
  min-height: 0;
  display: grid;
  grid-template: minmax(0, 1fr) 28px / minmax(0, 1fr) 28px;
  background: #fafafa;
  margin-right: 2px;
`;
const Tree = styled.ul`
  overflow: hidden;
  background: #fff;
  border-right: 1px solid #e2e2e2;
  border-bottom: 1px solid #e2e2e2;
`;
const Node = styled.li<{ $level: number; $on?: boolean }>`
  height: 48px;
  display: flex;
  align-items: center;
  gap: 8px;
  padding-left: ${(p) => 8 + p.$level * 28}px;
  white-space: nowrap;
  color: #000;
  background: ${(p) => (p.$on ? "#dadada" : "none")};
`;
const Twisty = styled.svg`
  width: 16px;
  height: 16px;
  margin-right: 6px;
  flex: none;
  fill: none;
  stroke: #808080;
  stroke-width: 2.5;
`;
const ThumbV = styled.span`
  width: 16px;
  height: 195px;
  margin: 6px 0 0 8px;
  border-radius: 8px;
  background: #c1c1c1;
`;
const ThumbH = styled.span`
  width: 251px;
  height: 16px;
  margin: 7px 0 0 6px;
  border-radius: 8px;
  background: #c1c1c1;
`;
const nodes: [number, string, string, boolean][] = [
  [0, "projectBlue", "test", true], [1, "folder", "Beispielausschnitte", true], [2, "folder", "Arbeitseinstellung", true],
  [3, "floorLink", "Geschosse", true], [4, "floorBlue", "3. OG", false], [4, "floorBlue", "2. Geschoss", false],
  [4, "floorGreen", "1. Geschoss", false], [4, "floorBlue", "0. EG", false], [4, "floorBlue", "-1. UG", false],
  [3, "viewLink", "Ansichten", false], [3, "viewLink", "Schnitte", false],
];
const Field = styled.input<{ $w?: number }>`
  && {
    height: 35px;
    min-width: 0;
    ${(p) => (p.$w ? css`width: ${p.$w}px; flex: none;` : css`flex: 1;`)}
    padding: 0 6px;
    background: #fff;
    border: 1px solid #d9d9d9;
    border-bottom: 2px solid #b6b6b6;
  }
`;
const InfoLine = styled.div`
  height: 41px;
  display: flex;
  align-items: center;
  gap: 9px;
`;
const Status = styled.div`
  height: 78px;
  display: flex;
  align-items: center;
  gap: 12px;
  padding: 0 0 6px 6px;
  font-weight: 700;
  color: #000;
`;
const RefStory = styled.button`
  flex: 1;
  height: 56px;
  display: flex;
  align-items: center;
  gap: 2px;
  padding-left: 6px;
  border-radius: 8px;
  background: #f5f5f5;
  box-shadow: 0 1px 2px rgba(0, 0, 0, 0.18);
  color: #b0b0b0;
  span { flex: 1; text-align: left; }
`;
const Muted = styled.label`
  color: #777;
`;
const SliderBox = styled.div`
  width: 262px;
  height: 56px;
  display: flex;
  flex-direction: column;
  padding-top: 12px;
`;
const Slider = styled.input`
  && {
    appearance: none;
    width: 100%;
    height: 32px;
    background: linear-gradient(#e0e0e0, #e0e0e0) 0 center / 100% 8px no-repeat;
  }
  &::-webkit-slider-thumb {
    appearance: none;
    width: 16px;
    height: 32px;
    border-radius: 8px;
    background: #f7f7f7;
    box-shadow: 0 1px 3px rgba(0, 0, 0, 0.3);
  }
`;
const Ticks = styled.div`
  display: flex;
  justify-content: space-between;
  margin-top: -4px;
  padding: 0 1px;
  span { width: 2px; height: 6px; background: #b2b2b2; }
`;
const Range = ({ id }: { id: string }) => (
  <SliderBox>
    <Slider id={id} type="range" min={0} max={10} defaultValue={10} />
    <Ticks>{Array.from({ length: 11 }, (_, i) => <span key={i} />)}</Ticks>
  </SliderBox>
);

/* ---------- status bar ---------- */

const StatusBar = styled.footer`
  height: 50px;
  flex: none;
  display: flex;
  align-items: center;
  padding: 0 24px 8px 13px;
  border-top: 2px solid #e2e2e2;
  p { flex: 1; margin: 0; }
`;
const StatusUser = styled.span`
  display: flex;
  margin-right: 108px;
`;
const Brand = styled.a`
  display: flex;
  align-items: center;
  margin-left: 20px;
  padding-left: 20px;
  border-left: 2px solid #9a9a9a;
  color: ${INK};
  font: 500 27px/30px Lato, sans-serif;
  text-decoration: none;
  white-space: pre;
  span { font-weight: 300; }
`;

const Head = ({ children, open = true }: { children: string; open?: boolean }) => (
  <SectionHead><Tri $open={open} />{children}</SectionHead>
);
const SplitButton = ({ label, icon }: { label: string; icon?: string }) => (
  <Split>
    <SplitMain>{icon && <Icon n={icon} s={32} />}{label}</SplitMain>
    <SplitDrop aria-label={`${label} Menü`}><Down /></SplitDrop>
  </Split>
);
const IconCell = ({ n, faded }: { n: string; faded?: boolean }) => (
  <Cell $faded={faded} aria-label={n}><Icon n={n} /></Cell>
);

export default function App() {
  return (
    <Desktop>
      <Global />
      <Window>
        <TitleBar>
          <Lights>
            <Light $c="#ed6a5e" aria-label="Schließen" />
            <Light $c="#f5bf4f" aria-label="Minimieren" />
            <Light $c="#61c554" aria-label="Zoomen" />
          </Lights>
          <Icon n="appHouse" s={32} />
          <TitleText $before={7} $after={5}>test</TitleText>
          <Redaction $w={280} $h={54} />
          <TitleText $before={10} $after={0}>- BIMcloud Basic für Archicad 29, Nutze</TitleText>
          <Redaction $w={135} $h={50} />
          <TitleText $before={5} $after={2}>]</TitleText>
        </TitleBar>

        <Toolbar>
          <Grip $w={20} />
          {tools.map((t, i) =>
            t === "|" ? <Sep key={i} /> :
            t === "grip" ? <Grip key={i} $w={24} /> :
            typeof t === "string" ? <IconCell key={i} n={t} /> : (
              <DropCell key={i} $on={t[1] === "on"}>
                <button aria-label={t[0]}><Icon n={t[0]} /></button>
                <button aria-label={`${t[0]} Menü`}><Down /></button>
              </DropCell>
            )
          )}
        </Toolbar>

        <InfoStrip>
          <InfoLabel>Haupt:</InfoLabel>
          <InfoRow>
            <InfoGrip />
            <InfoButton aria-label="Auswahl"><Icon n="markClip" s={32} /><Right /></InfoButton>
            <InfoButton aria-label="Rahmen"><Icon n="markRect" s={36} /><Right /></InfoButton>
            <InfoButton aria-label="Magnet"><Spacer /><Icon n="magnet" s={32} /><Spacer /></InfoButton>
            <InfoButton $big aria-label="Pfeil"><Icon n="arrow" s={32} /><Right /></InfoButton>
          </InfoRow>
        </InfoStrip>

        <Main>
          <Palette>
            <Grabber $w={118} $h={14} />
            <ToolList>
              <li>
                <ToolButton $on>
                  <ToolSvg viewBox="0 -2 60 48"><path fill="#8f9498" d="M22 7V33L29 27 35 37Q37 40 39 36L34 26 42 23Z" /></ToolSvg>Pfeil
                </ToolButton>
              </li>
              <li>
                <ToolButton>
                  <ToolSvg viewBox="0 -2 60 48"><path fill="none" strokeDasharray="6 3" d="M13 9H49V37H13Z" /></ToolSvg>Markierungsrahmen
                </ToolButton>
              </li>
            </ToolList>
            <Group><Tri $open />Planung</Group>
            <ToolList>
              {planTools.map(([name, art]) => (
                <li key={name}><ToolButton><ToolSvg viewBox="0 -2 60 48">{art}</ToolSvg>{name}</ToolButton></li>
              ))}
            </ToolList>
            <Group><Tri />Sichten</Group>
            <Group><Tri />Dokumentation</Group>
          </Palette>

          <Centre>
            <Tabs>
              <TabLead aria-label="Übersicht"><Icon n="tiles" /></TabLead>
              <Tab><Icon n="floorGreen" />1. Geschoss [1. Geschoss]</Tab>
              <Tab $on><Icon n="box3d" />[3D / Alle]</Tab>
              <Tab $end><Icon n="lighthouse" />[Aktions-Center]</Tab>
              <TabMenu aria-label="Tab-Menü"><Icon n="houseList" /><Down /></TabMenu>
            </Tabs>
            <Viewport>
              <Model />
              <Handle $side="top" aria-label="Oben"><Dashes /></Handle>
              <Handle $side="bottom" aria-label="Unten"><Dashes /></Handle>
              <Handle $side="left" aria-label="Links"><Dashes /></Handle>
              <Handle $side="right" aria-label="Rechts"><Dashes /></Handle>
            </Viewport>
            <QuickBar>
              <QuickNav $lead={6}>
                <button aria-label="Zurück"><Icon n="zoomBack" s={32} /></button>
                <button aria-label="Vor"><Icon n="zoomFwd" s={32} /></button>
                <button aria-label="Zoom"><Icon n="zoomIn" s={32} /></button>
              </QuickNav>
              <QuickNav $lead={10}>
                <button aria-label="Orbit"><Icon n="orbit" s={32} /></button>
                <button aria-label="Gehen"><Icon n="walk" s={32} /></button>
              </QuickNav>
              <QuickOptions>
                {quick.map(([icon, label], i) => (
                  <QuickOption key={i} $dim={i < 2} $center={i === 2}>
                    <Icon n={icon} s={30} /><span>{label}</span><Right dim={i < 2} />
                  </QuickOption>
                ))}
              </QuickOptions>
            </QuickBar>
          </Centre>

          <Panel>
            <PanelHead><Initial>I</Initial><Redaction $w={103} $h={45} /><HeadLine /></PanelHead>
            <OnlineRow>
              <Icon n="user" /><span>Online</span>
              <SmallButton $w={34} $h={34} aria-label="Mehr"><Right /></SmallButton>
            </OnlineRow>
            <Head>Arbeitsbereich</Head>
            <Section $p="9px 6px 12px 6px" $line>
              <Row><IconCol><Icon n="exchange" /></IconCol><SplitButton label="Senden & empfang..." icon="saveSend" /></Row>
            </Section>
            <Section $p="14px 6px 12px 6px" $gap={10} $line>
              <Row><IconCol><Icon n="down" /></IconCol><SplitButton label="Reservieren..." /></Row>
              <Row><IconCol><Icon n="up2" /></IconCol><SplitButton label="Alles freigeben" /></Row>
            </Section>
            <Section $p="14px 6px 10px 6px" $gap={8}>
              <Caption htmlFor="farbe">Farbiger Arbeitsbereich</Caption>
              <Row>
                <IconCol><Icon n="wheel" /></IconCol>
                <SelectWrap>
                  <select id="farbe"><option>Alle mit Originalfarbe</option></select>
                  <Stepper><svg viewBox="0 0 32 32"><path d="M10 12 16 6 22 12M10 20 16 26 22 20" /></svg></Stepper>
                </SelectWrap>
              </Row>
              <WideButton>Mein Arbeitsbereich</WideButton>
            </Section>
            <Head>Nutzer</Head>
            <Section $p="3px 0 0">
              <Table>
                <colgroup><Col $w={68} /><Col $w={48} /><col /><Col $w={29} /></colgroup>
                <thead><tr><th /><th><Icon n="wheel" s={34} /></th><th>Name</th><th /></tr></thead>
              </Table>
            </Section>
            <List><Redaction $w={329} $h={188} /></List>
            <ToolsRow $h={72} $p="0 4px 4px 6px">
              <SmallButton $w={56} $h={56} $dim aria-label="Nutzer entfernen"><Icon n="userX" /></SmallButton>
              <Spacer />
              <IconCell n="mailPlus" />
              <IconCell n="wheel" faded />
              <IconCell n="userDoc" />
            </ToolsRow>
            <Head>Nachrichten</Head>
            <ToolsRow $h={68}>
              <ActiveIcon aria-label="Eingang"><Icon n="mails" /></ActiveIcon>
              <IconCell n="outbox" />
              <IconCell n="mailCheck" />
            </ToolsRow>
            <Table>
              <colgroup><Col $w={24} /><col /><Col $w={94} /><Col $w={29} /></colgroup>
              <thead><tr><th /><th>Von</th><th>Wann ▼</th><th /></tr></thead>
            </Table>
            <List />
            <ToolsRow $h={68}>
              <Spacer /><IconCell n="mailPlus" /><IconCell n="mailReply" /><IconCell n="mailDone" />
            </ToolsRow>
            <Head open={false}>Nachverfolgte Änderungen</Head>
            <Section $p="4px 0 0" />
          </Panel>

          <Panel>
            <Grabber $w={140} $h={16} />
            <ToolsRow $h={62} $p="2px 6px 0 4px">
              <IconCell n="house" />
              <Sep />
              <ActiveIcon aria-label="Ausschnitte"><Icon n="houseFrame" /></ActiveIcon>
              <IconCell n="layout" />
              <IconCell n="pages" />
              <Spacer />
              <SmallButton $w={66} $h={42} $between aria-label="Menü"><Icon n="menu" /><Right /></SmallButton>
            </ToolsRow>
            <SearchRow>
              <SearchBox>
                <Icon n="search" s={32} />
                <input aria-label="Ausschnitt-Mappe suchen" placeholder="Ausschnitt-Mappe" />
              </SearchBox>
              <SmallButton $w={66} $h={42} $between aria-label="Ansicht"><Icon n="userEye" /><Right /></SmallButton>
            </SearchRow>
            <TreeArea>
              <Tree>
                {nodes.map(([level, icon, label, open]) => (
                  <Node key={label} $level={level} $on={icon === "floorGreen"}>
                    <Twisty viewBox="0 0 16 16">{open && <path d="M1 4 8 11 15 4" />}</Twisty>
                    <Icon n={icon} />{label}
                  </Node>
                ))}
              </Tree>
              <ThumbV />
              <ThumbH />
            </TreeArea>
            <ToolsRow $h={70} $p="0 4px">
              <IconCell n="addView" /><IconCell n="addLinked" /><IconCell n="addFolder" /><IconCell n="listBlue" /><IconCell n="redX" />
            </ToolsRow>
            <Head>Beschreibungen</Head>
            <Section $p="6px 6px 6px 5px">
              <Row $gap={10}>
                <Icon n="floorSmall" s={30} />
                <Field $w={61} aria-label="Nummer" defaultValue="1." />
                <Field aria-label="Name" defaultValue="Geschoss" />
              </Row>
              <InfoLine><Icon n="layers" s={30} />00 Arbeitseinstellung</InfoLine>
              <InfoLine><Icon n="scale" s={30} />1:100</InfoLine>
              <InfoLine><Icon n="frame" s={30} />00 Arbeitseinstellung</InfoLine>
              <Section $p="8px 0 0"><WideButton>Einstellungen...</WideButton></Section>
            </Section>
            <Head>Teamwork-Status</Head>
            <Section $p="0 6px 5px 6px">
              <Status><Icon n="statusDot" />Bearbeitbar</Status>
              <Row><SplitButton label="Freigeben" /></Row>
            </Section>
            <Grabber $w={140} $h={22} />
            <Section $p="1px 6px 0">
              <Row $gap={5}>
                <SmallButton $w={56} $h={56} $dim aria-label="Transparentpause"><Icon n="trace" /></SmallButton>
                <RefStory>
                  <Svg $s={36} viewBox="0 0 36 36"><g stroke={GREY}>{icons.floor}</g></Svg><span>0. EG</span><Right dim />
                </RefStory>
              </Row>
            </Section>
            <Section $p="8px 4px 8px 4px" $line>
              <Row>
                <IconCell n="traceMove" /><Spacer /><IconCell n="bMove" /><IconCell n="bRotate" /><IconCell n="bReset" /><IconCell n="bSwap" />
              </Row>
            </Section>
            <Section $p="15px 6px 13px 5px" $gap={12} $line>
              <Muted htmlFor="pause">Transparentpause:</Muted>
              <Row $gap={7}>
                <SmallButton $w={56} $h={56} $dim $between aria-label="Farbe"><Icon n="redBlock" s={30} /><Right dim /></SmallButton>
                <Range id="pause" />
                <SmallButton $w={26} $h={56} $dim aria-label="Mehr"><Right dim /></SmallButton>
              </Row>
              <Muted htmlFor="aktiv">Aktiv:</Muted>
              <Row $gap={7}>
                <SmallButton $w={56} $h={56} $dim $between aria-label="Farben"><Icon n="rgb" s={30} /><Right dim /></SmallButton>
                <Range id="aktiv" />
              </Row>
            </Section>
            <ToolsRow $h={71} $p="11px 64px 0 0">
              <Spacer /><IconCell n="hand" /><IconCell n="overlap" /><IconCell n="splitView" /><IconCell n="hideHatch" />
            </ToolsRow>
          </Panel>
        </Main>

        <StatusBar>
          <p>Klicken Sie mit dem Cursor auf ein Element oder ziehen Sie einen Auswahlbereich auf. Drücken Sie für Morphbearbeitung Strg/Ctrl+Umsch, um zwischen Element-/Unterelement-Auswahl zu wechseln.</p>
          <StatusUser><Icon n="user" /></StatusUser>
          <Icon n="windows" s={34} />
          <Brand href="#">GRAPHISOFT <span>ID</span></Brand>
        </StatusBar>
      </Window>
    </Desktop>
  );
}
